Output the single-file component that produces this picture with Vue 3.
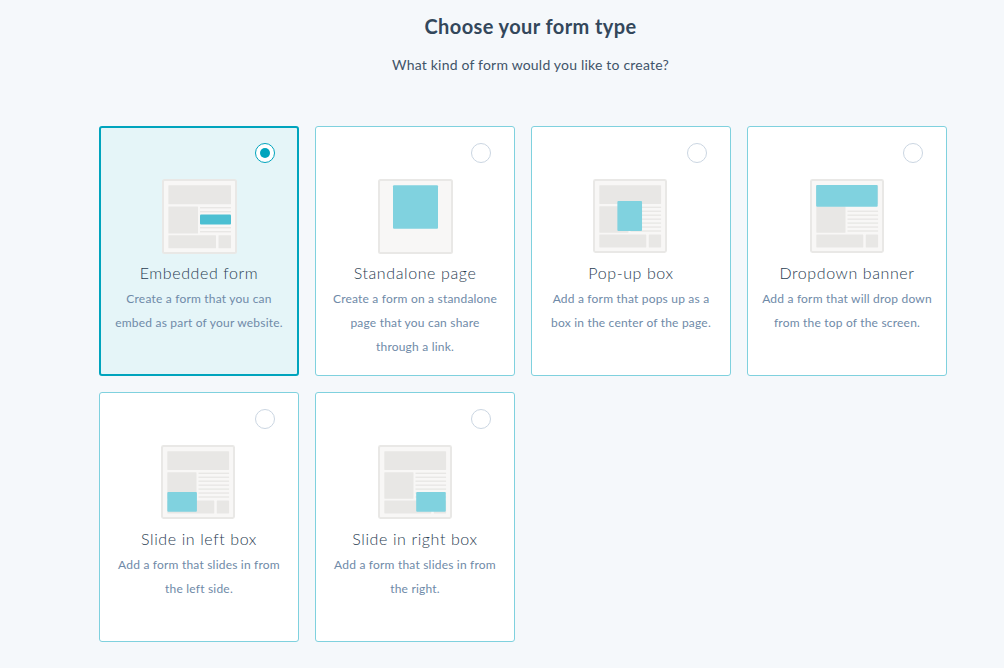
<script setup>
const lines = [28, 32, 48, 52]
const allLines = [28, 32, 36, 40, 44, 48, 52]
const cards = [
  { title: 'Embedded form', desc: ['Create a form that you can', 'embed as part of your website.'], type: 'embedded', selected: true, blue: { x: 38, y: 35.5, width: 31, height: 10 }, lines },
  { title: 'Standalone page', desc: ['Create a form on a standalone', 'page that you can share', 'through a link.'], type: 'standalone', blue: { x: 15, y: 6.3, width: 45, height: 43.5 }, lines: [] },
  { title: 'Pop-up box', desc: ['Add a form that pops up as a', 'box in the center of the page.'], type: 'popup', blue: { x: 24.7, y: 22.3, width: 25, height: 30.5 }, lines: allLines },
  { title: 'Dropdown banner', desc: ['Add a form that will drop down', 'from the top of the screen.'], type: 'dropdown', blue: { x: 6.2, y: 6, width: 62.4, height: 22 }, lines: [32, 36, 40, 44, 48, 52] },
  { title: 'Slide in left box', desc: ['Add a form that slides in from', 'the left side.'], type: 'left', blue: { x: 6.4, y: 47.7, width: 30, height: 20 }, lines: allLines },
  { title: 'Slide in right box', desc: ['Add a form that slides in from', 'the right.'], type: 'right', blue: { x: 38.7, y: 47.7, width: 30, height: 20 }, lines: allLines }
]
</script>

<template>
  <main class="page">
    <h1 class="heading">Choose your form type</h1>
    <p class="subheading">What kind of form would you like to create?</p>
    <div class="grid">
      <div v-for="card in cards" :key="card.title" class="card" :class="{ selected: card.selected }">
        <span class="radio"><span v-if="card.selected" class="dot"></span></span>
        <div class="thumb-box">
          <svg class="thumb" :class="'thumb-' + card.type" viewBox="0 0 75 75">
            <rect x="1" y="1" width="73" height="73" rx="1.5" fill="#f8f7f6" stroke="#e9e8e6" stroke-width="2" />
            <g v-if="card.type !== 'standalone'" fill="#e8e7e5">
              <rect x="6.4" y="6.3" width="62.6" height="19" rx="0.5" />
              <rect x="6.4" y="27.5" width="29.6" height="27" rx="0.5" />
              <rect x="6.4" y="56.3" width="47.6" height="13" rx="0.5" />
              <rect x="56.5" y="56.3" width="12.5" height="13" rx="0.5" />
              <rect v-for="y in card.lines" :key="y" x="38" :y="y" width="31" height="1.4" />
            </g>
            <rect v-bind="card.blue" rx="1" :fill="card.selected ? '#4bbfd2' : '#80d2df'" />
          </svg>
        </div>
        <h2 class="title">{{ card.title }}</h2>
        <p class="desc"><span v-for="line in card.desc" :key="line" class="desc-line">{{ line }}</span></p>
      </div>
    </div>
  </main>
</template>

<style>
html, body { margin: 0; background: #f5f8fb; }
</style>

<style scoped>
.page {
  width: 1004px;
  height: 668px;
  overflow: hidden;
  box-sizing: border-box;
  padding-top: 13px;
  background: #f5f8fb;
  font-family: Lato, "Open Sans", sans-serif;
  color: #33475b;
}
.heading {
  margin: 0;
  padding-left: 57px;
  text-align: center;
  font-size: 20px;
  line-height: 26px;
  font-weight: 700;
  letter-spacing: 0.4px;
}
.subheading {
  margin: 15px 0 0;
  padding-left: 57px;
  text-align: center;
  font-size: 14px;
  line-height: 22px;
  letter-spacing: 0.2px;
  color: #3f5469;
}
.grid {
  display: grid;
  grid-template-columns: repeat(4, 200px);
  grid-auto-rows: 250px;
  gap: 16px;
  margin: 50px 0 0 99px;
}
.card {
  position: relative;
  box-sizing: border-box;
  background: #fff;
  border: 1px solid #7fd1de;
  border-radius: 3px;
  padding-top: 52px;
  text-align: center;
}
.card.selected {
  background: #e5f5f8;
  border: 2px solid #00a4bd;
  padding-top: 51px;
}
.radio {
  position: absolute;
  top: 16px;
  right: 23px;
  box-sizing: border-box;
  width: 20px;
  height: 20px;
  border: 1.5px solid #cbd6e2;
  border-radius: 50%;
  background: #fff;
  display: flex;
  align-items: center;
  justify-content: center;
}
.selected .radio {
  top: 15px;
  right: 22px;
  border-color: #00a4bd;
}
.dot {
  width: 10px;
  height: 10px;
  border-radius: 50%;
  background: #00a4bd;
}
.thumb-box {
  height: 75px;
}
.thumb {
  display: block;
  width: 74px;
  height: 74px;
  margin-left: 62px;
}
.thumb-embedded {
  width: 75px;
  height: 75px;
  margin-left: 61px;
}
.thumb-standalone {
  width: 75px;
  height: 75px;
}
.thumb-popup {
  margin-left: 61.3px;
}
.thumb-left {
  margin-left: 61px;
}
.title {
  margin: 7px 0 0;
  font-size: 16px;
  line-height: 24px;
  font-weight: 300;
  letter-spacing: 0.6px;
  color: #2a3d52;
}
.desc {
  margin: 2px 0 0;
  font-size: 12px;
  line-height: 24px;
  color: #6f8aa8;
  letter-spacing: 0.2px;
}
.desc-line {
  display: block;
  white-space: nowrap;
}
</style>
